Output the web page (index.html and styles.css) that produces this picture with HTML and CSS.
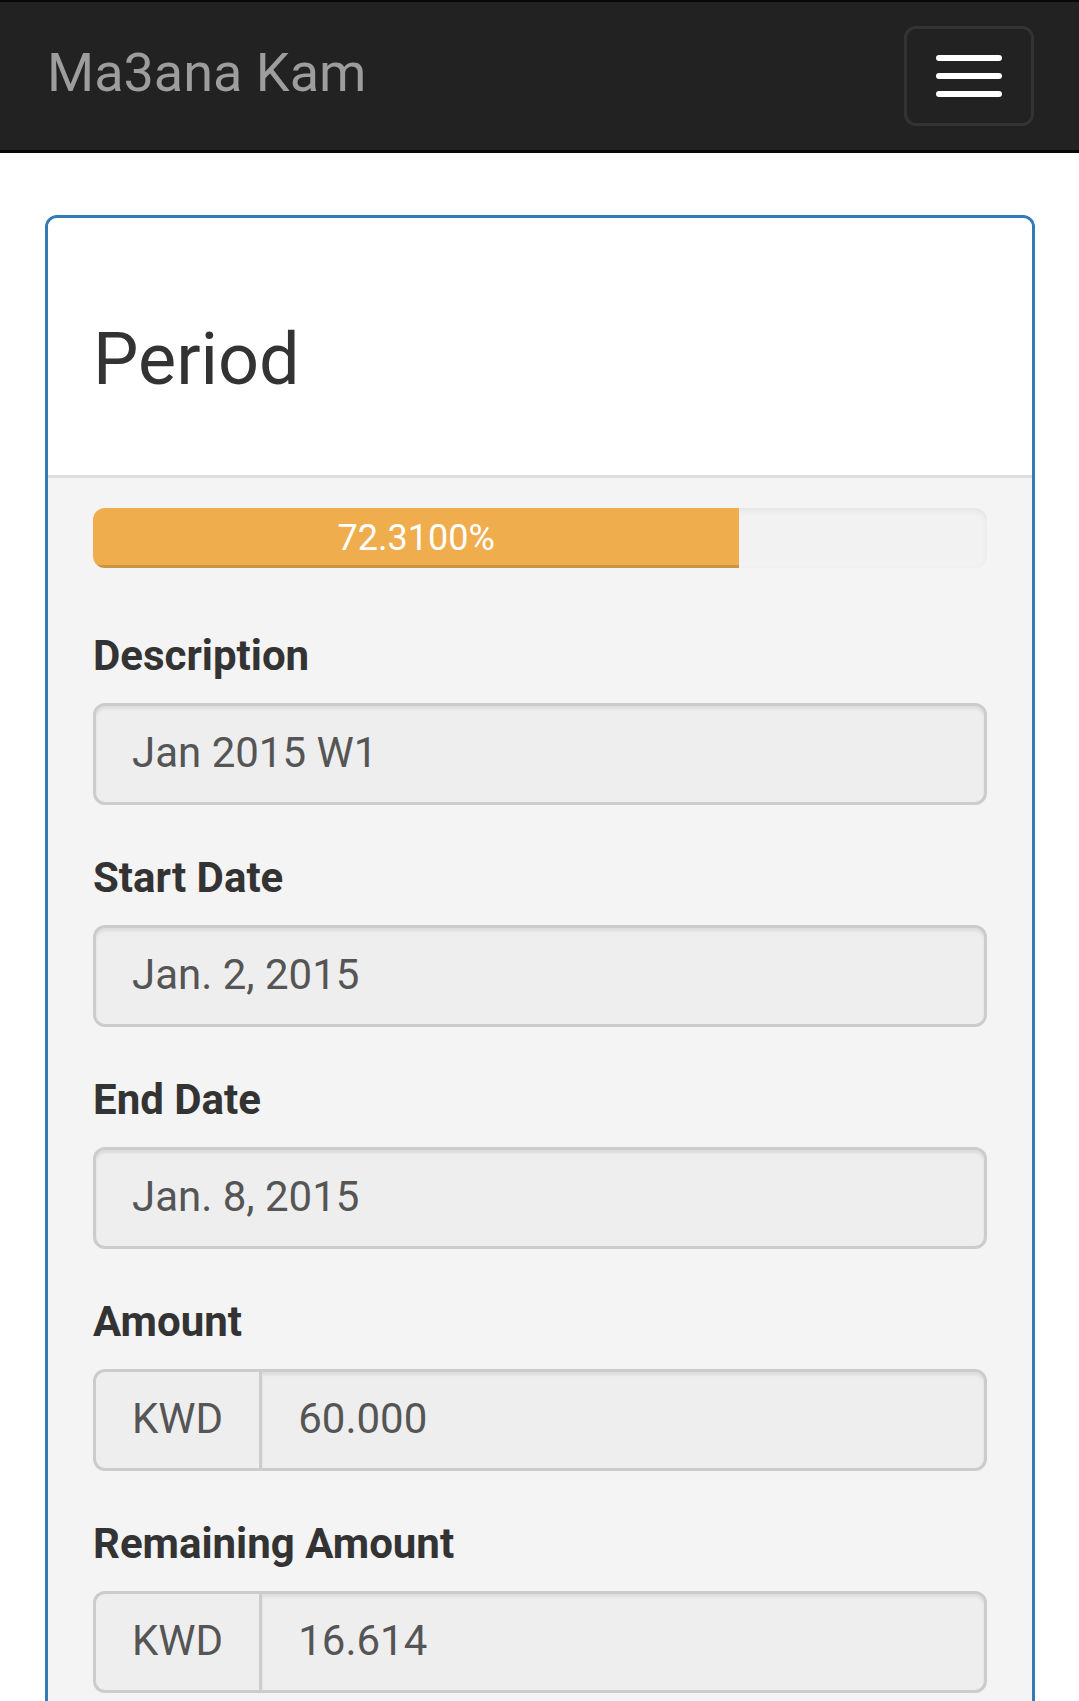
FILE: index.html
```html
<!DOCTYPE html>
<html lang="en">
<head>
<meta charset="utf-8">
<title>Ma3ana Kam - Period</title>
<link rel="stylesheet" href="styles.css">
</head>
<body>
<nav class="navbar">
  <a class="brand" href="#">Ma3ana Kam</a>
  <button class="toggle" type="button" aria-label="Toggle navigation">
    <span class="bar"></span>
    <span class="bar"></span>
    <span class="bar"></span>
  </button>
</nav>
<main class="container">
  <section class="panel">
    <header class="panel-heading">
      <h3 class="panel-title">Period</h3>
    </header>
    <div class="panel-body">
      <div class="progress">
        <div class="progress-bar" style="width: 72.31%">72.3100%</div>
      </div>
      <div class="form-group">
        <label class="label">Description</label>
        <div class="field">Jan 2015 W1</div>
      </div>
      <div class="form-group">
        <label class="label">Start Date</label>
        <div class="field">Jan. 2, 2015</div>
      </div>
      <div class="form-group">
        <label class="label">End Date</label>
        <div class="field">Jan. 8, 2015</div>
      </div>
      <div class="form-group">
        <label class="label">Amount</label>
        <div class="input-group">
          <span class="addon">KWD</span>
          <div class="field field-grouped">60.000</div>
        </div>
      </div>
      <div class="form-group">
        <label class="label">Remaining Amount</label>
        <div class="input-group">
          <span class="addon">KWD</span>
          <div class="field field-grouped">16.614</div>
        </div>
      </div>
    </div>
  </section>
</main>
</body>
</html>
```
FILE: styles.css
```css
* { box-sizing: border-box; }

html, body {
  margin: 0;
  padding: 0;
  background: #ffffff;
  font-family: Roboto, "Noto Sans", "Liberation Sans", sans-serif;
  color: #333333;
}

.navbar {
  display: flex;
  align-items: center;
  justify-content: space-between;
  height: 153px;
  background: #222222;
  border-top: 2px solid #080808;
  border-bottom: 3px solid #080808;
}

.brand {
  padding: 0 0 6px 47px;
  font-size: 54px;
  line-height: 60px;
  color: #9d9d9d;
  text-decoration: none;
}

.toggle {
  margin-right: 45px;
  width: 130px;
  height: 100px;
  padding: 0;
  display: flex;
  flex-direction: column;
  align-items: center;
  justify-content: center;
  gap: 12px;
  background: transparent;
  border: 3px solid #333333;
  border-radius: 12px;
}

.bar {
  display: block;
  width: 66px;
  height: 6px;
  border-radius: 3px;
  background: #ffffff;
}

.container {
  padding: 0 44px 0 45px;
  margin-top: 62px;
}

.panel {
  border: 3px solid #337ab7;
  border-radius: 12px;
  overflow: hidden;
  background: #f4f4f4;
}

.panel-heading {
  background: #ffffff;
  padding: 102px 45px 76px;
  border-bottom: 3px solid #dddddd;
}

.panel-title {
  margin: 0;
  font-size: 72px;
  font-weight: 400;
  line-height: 79px;
  color: #333333;
}

.panel-body {
  padding: 30px 45px 60px;
  background: #f4f4f4;
}

.progress {
  height: 60px;
  margin-bottom: 60px;
  border-radius: 12px;
  background: #f2f2f2;
  box-shadow: inset 0 3px 6px rgba(0, 0, 0, 0.06);
  overflow: hidden;
  display: flex;
}

.progress-bar {
  height: 100%;
  background: #f0ad4e;
  color: #ffffff;
  font-size: 36px;
  line-height: 60px;
  text-align: center;
  box-shadow: inset 0 -3px 0 rgba(0, 0, 0, 0.15);
}

.form-group {
  margin-bottom: 45px;
}

.label {
  display: block;
  font-size: 42px;
  font-weight: 700;
  line-height: 56px;
  margin-bottom: 19px;
  color: #333333;
}

.field {
  display: flex;
  align-items: center;
  height: 102px;
  padding: 0 36px 4px;
  font-size: 42px;
  color: #555555;
  background: #eeeeee;
  border: 3px solid #cccccc;
  border-radius: 12px;
  box-shadow: inset 0 3px 3px rgba(0, 0, 0, 0.075);
}

.input-group {
  display: flex;
}

.addon {
  display: flex;
  align-items: center;
  height: 102px;
  padding: 0 36px 4px;
  font-size: 42px;
  color: #555555;
  background: #eeeeee;
  border: 3px solid #cccccc;
  border-right: 0;
  border-radius: 12px 0 0 12px;
}

.field-grouped {
  flex: 1;
  border-radius: 0 12px 12px 0;
}
```
